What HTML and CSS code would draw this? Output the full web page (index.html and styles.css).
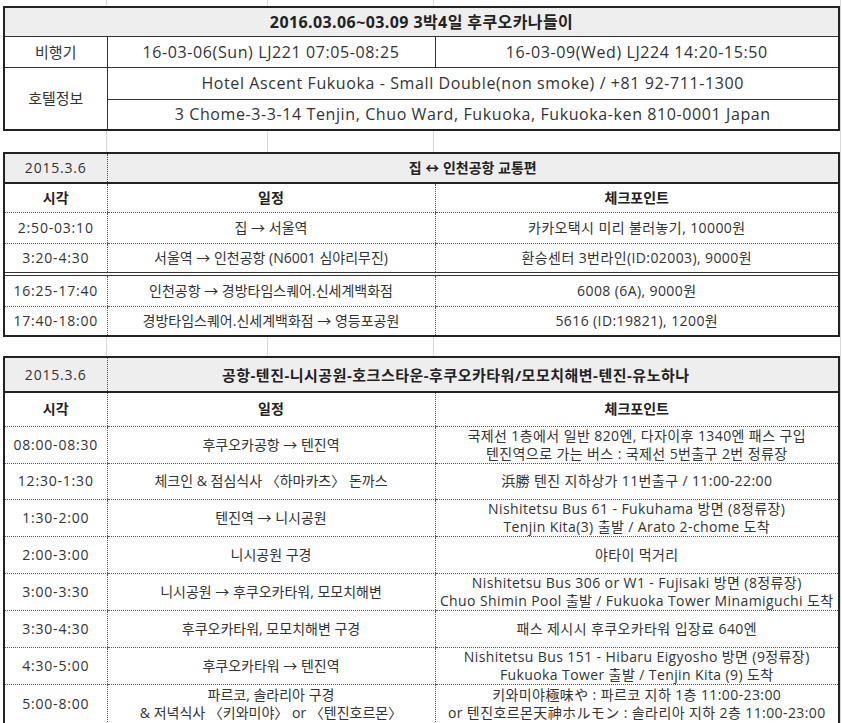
FILE: index.html
```html
<!DOCTYPE html>
<html lang="ko">
<head>
<meta charset="utf-8">
<title>후쿠오카 나들이</title>
<link rel="stylesheet" href="styles.css">
</head>
<body>
<div class="page">

  <div class="sheet sheet-info">
    <table class="info">
      <colgroup><col class="c1"><col class="c2"><col class="c3"></colgroup>
      <tr class="h-title"><td colspan="3" class="title">2016.03.06~03.09 3박4일 후쿠오카나들이</td></tr>
      <tr class="h-flight"><td class="lbl">비행기</td><td class="val">16-03-06(Sun) LJ221 07:05-08:25</td><td class="val">16-03-09(Wed) LJ224 14:20-15:50</td></tr>
      <tr class="h-hotel1"><td rowspan="2" class="lbl">호텔정보</td><td colspan="2" class="val">Hotel Ascent Fukuoka - Small Double(non smoke) / +81 92-711-1300</td></tr>
      <tr class="h-hotel2"><td colspan="2" class="val">3 Chome-3-3-14 Tenjin, Chuo Ward, Fukuoka, Fukuoka-ken 810-0001 Japan</td></tr>
    </table>
  </div>

  <div class="sheet sheet-day1">
    <table class="plan">
      <colgroup><col class="c1"><col class="c2"><col class="c3"></colgroup>
      <tr class="head d1-head"><td>2015.3.6</td><td colspan="2" class="bold">집 ↔ 인천공항 교통편</td></tr>
      <tr class="cols d1-cols"><td class="bold">시각</td><td class="bold">일정</td><td class="bold">체크포인트</td></tr>
      <tr class="d1-r1"><td>2:50-03:10</td><td>집 → 서울역</td><td>카카오택시 미리 불러놓기, 10000원</td></tr>
      <tr class="d1-r2"><td>3:20-4:30</td><td>서울역 → 인천공항 (N6001 심야리무진)</td><td>환승센터 3번라인(ID:02003), 9000원</td></tr>
      <tr class="split d1-r3"><td>16:25-17:40</td><td>인천공항 → 경방타임스퀘어.신세계백화점</td><td>6008 (6A), 9000원</td></tr>
      <tr class="d1-r4"><td>17:40-18:00</td><td>경방타임스퀘어.신세계백화점 → 영등포공원</td><td>5616 (ID:19821), 1200원</td></tr>
    </table>
  </div>

  <div class="sheet sheet-day2">
    <table class="plan">
      <colgroup><col class="c1"><col class="c2"><col class="c3"></colgroup>
      <tr class="head d2-head"><td>2015.3.6</td><td colspan="2" class="bold title2">공항-텐진-니시공원-호크스타운-후쿠오카타워/모모치해변-텐진-유노하나</td></tr>
      <tr class="cols d2-cols"><td class="bold">시각</td><td class="bold">일정</td><td class="bold">체크포인트</td></tr>
      <tr class="d2-r1"><td>08:00-08:30</td><td>후쿠오카공항 → 텐진역</td><td>국제선 1층에서 일반 820엔, 다자이후 1340엔 패스 구입<br>텐진역으로 가는 버스 : 국제선 5번출구 2번 정류장</td></tr>
      <tr class="d2-r2"><td>12:30-1:30</td><td>체크인 &amp; 점심식사 〈하마카츠〉 돈까스</td><td>浜勝 텐진 지하상가 11번출구 / 11:00-22:00</td></tr>
      <tr class="d2-r3"><td>1:30-2:00</td><td>텐진역 → 니시공원</td><td>Nishitetsu Bus 61 - Fukuhama 방면 (8정류장)<br>Tenjin Kita(3) 출발 / Arato 2-chome 도착</td></tr>
      <tr class="d2-r4"><td>2:00-3:00</td><td>니시공원 구경</td><td>야타이 먹거리</td></tr>
      <tr class="d2-r5"><td>3:00-3:30</td><td>니시공원 → 후쿠오카타워, 모모치해변</td><td>Nishitetsu Bus 306 or W1 - Fujisaki 방면 (8정류장)<br>Chuo Shimin Pool 출발 / Fukuoka Tower Minamiguchi 도착</td></tr>
      <tr class="d2-r6"><td>3:30-4:30</td><td>후쿠오카타워, 모모치해변 구경</td><td>패스 제시시 후쿠오카타워 입장료 640엔</td></tr>
      <tr class="d2-r7"><td>4:30-5:00</td><td>후쿠오카타워 → 텐진역</td><td>Nishitetsu Bus 151 - Hibaru Eigyosho 방면 (9정류장)<br>Fukuoka Tower 출발 / Tenjin Kita (9) 도착</td></tr>
      <tr class="d2-r8"><td class="last-time">5:00-8:00</td><td class="last-text">파르코, 솔라리아 구경<br>&amp; 저녁식사 〈키와미야〉 or 〈텐진호르몬〉</td><td class="last-text">키와미야極味や : 파르코 지하 1층 11:00-23:00<br>or 텐진호르몬天神ホルモン : 솔라리아 지하 2층 11:00-23:00</td></tr>
    </table>
  </div>

</div>
</body>
</html>
```

FILE: styles.css
```css
html, body {
  margin: 0;
  padding: 0;
}

body {
  min-height: 723px;
  font-family: "Open Sans", "Noto Sans CJK KR", sans-serif;
  color: #333;
  background-color: #fff;
  background-image:
    linear-gradient(#d9d9d9, #d9d9d9),
    linear-gradient(#d9d9d9, #d9d9d9),
    linear-gradient(#d9d9d9, #d9d9d9),
    linear-gradient(#d9d9d9, #d9d9d9);
  background-size: 1px 100%;
  background-repeat: no-repeat;
  background-position: 106px 0, 267px 0, 433px 0, 840px 0;
}

.page {
  padding: 6px 2px 0 3px;
}

.sheet {
  border: 2px solid #222;
  background: #fff;
}

.sheet-day1 { margin-top: 21px; }
.sheet-day2 { margin-top: 19px; }

table {
  width: 100%;
  border-collapse: collapse;
  border-style: hidden;
  table-layout: fixed;
}

col.c1 { width: 102px; }
col.c2 { width: 328px; }

td {
  padding: 0;
  text-align: center;
  vertical-align: middle;
  white-space: nowrap;
}

/* ---------- info table ---------- */
.info td {
  font-size: 15px;
  line-height: 18px;
  border: 1px solid #333;
}

.info .val {
  font-size: 16px;
  letter-spacing: 0.6px;
}

.info .title {
  background: #eeeeee;
  font-weight: 700;
  color: #222;
  font-size: 16px;
  letter-spacing: 0.4px;
}

.h-title  { height: 28px; }
.h-flight { height: 31px; }
.h-hotel1 { height: 32px; }
.h-hotel2 { height: 30px; }

/* ---------- plan tables ---------- */
.plan td {
  font-size: 14px;
  line-height: 18px;
  border-bottom: 1px dotted #555;
}

.plan td + td {
  border-left: 1px dotted #555;
}

.plan tr:not(.cols) td:first-child {
  letter-spacing: 0.8px;
}

.plan tr:not(.cols):not(.head) td:nth-child(3) {
  letter-spacing: 0.4px;
}

.plan .head td {
  background: #eeeeee;
  border-bottom: 2px solid #222;
}

.plan .bold {
  font-weight: 700;
  color: #222;
}

.plan .split td {
  border-top: 4px double #333;
}

.plan .title2 {
  font-size: 15px;
  letter-spacing: 0.5px;
  padding-right: 34px;
}

/* last row, cut by the bottom of the window */
.plan td.last-text {
  vertical-align: top;
  padding-top: 1px;
}

.plan td.last-time {
  vertical-align: top;
  line-height: 38px;
}

.d1-head { height: 29px; }
.d1-cols { height: 29px; }
.d1-r1   { height: 31px; }
.d1-r2   { height: 31px; }
.d1-r3   { height: 32px; }
.d1-r4   { height: 29px; }

.d2-head { height: 34px; }
.d2-cols { height: 34px; }
.d2-r1   { height: 37px; }
.d2-r2   { height: 36px; }
.d2-r3   { height: 36px; }
.d2-r4   { height: 37px; }
.d2-r5   { height: 37px; }
.d2-r6   { height: 37px; }
.d2-r7   { height: 36px; }
.d2-r8   { height: 40px; }
```
